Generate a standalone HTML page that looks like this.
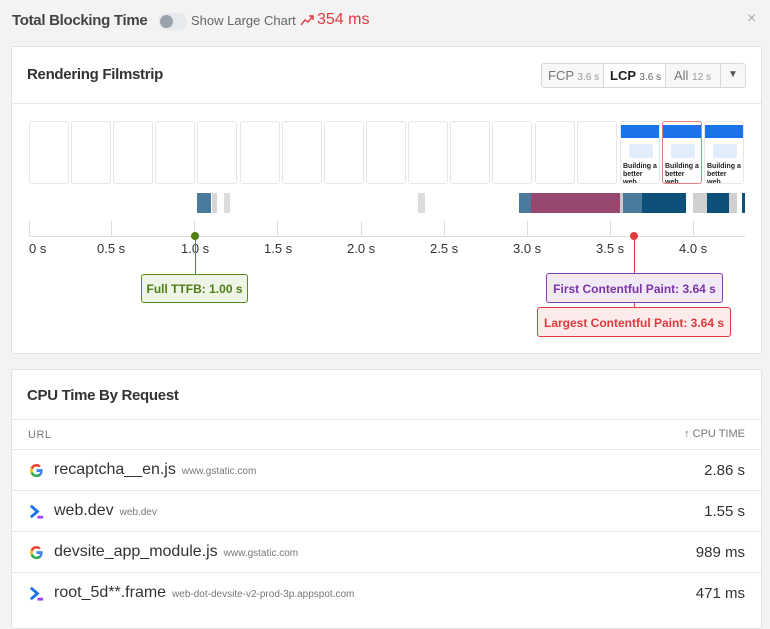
<!DOCTYPE html>
<html><head><meta charset="utf-8"><style>
*{box-sizing:border-box;margin:0;padding:0}
body{width:770px;height:612px;overflow:hidden;background:#f3f3f3;font-family:"Liberation Sans",Arial,sans-serif;color:#333;position:relative}
.abs{position:absolute}
.card{position:absolute;left:11px;width:751px;background:#fff;border:1px solid #e2e2e2;border-radius:3px}
.fr{position:absolute;top:121px;width:40px;height:63px;border:1px solid #e6e6e6;border-radius:3px;background:#fff;overflow:hidden}
.fr .hd{height:13px;background:#1a73e8;margin-top:3px}
.fr .img{position:absolute;left:8px;top:22px;width:24px;height:14px;background:#e3eefc;border-radius:2px}
.fr .t{position:absolute;left:2px;top:41px;font-size:7px;font-weight:bold;line-height:8px;color:#222}
.bar{position:absolute;top:193px;height:20px}
.tick{position:absolute;top:221px;width:1px;height:15px;background:#ddd}
.lab{position:absolute;top:241px;font-size:13px;color:#333}
.row{position:absolute;left:0;width:749px;height:41px;border-top:1px solid #e6e6e6}
.row .ic{position:absolute;left:16px;top:12px;width:17px;height:17px}
.row .n{position:absolute;left:42px;top:11px;font-size:16px;color:#333}
.row .d{font-size:10px;color:#777;margin-left:6px}
.row .v{position:absolute;right:16px;top:12px;font-size:15px;color:#333}
.ttl{font-size:15px;font-weight:bold;letter-spacing:-0.3px}
</style></head><body>
<div class="abs ttl" style="left:12px;top:12px;color:#444">Total Blocking Time</div>
<div class="abs" style="left:158px;top:13px;width:29px;height:17px;border-radius:9px;background:#e6e9ed"></div>
<div class="abs" style="left:160px;top:15px;width:13px;height:13px;border-radius:50%;background:#9aa3ab"></div>
<div class="abs" style="left:191px;top:13px;font-size:13px;color:#666">Show Large Chart</div>
<svg class="abs" style="left:300px;top:14px" width="14" height="12" viewBox="0 0 14 12"><path d="M1 11 L5 6 L8 8 L13 2 M9 2 H13 V6" stroke="#e0393e" stroke-width="1.4" fill="none"/></svg>
<div class="abs" style="left:317px;top:11px;font-size:16px;color:#e0393e">354 ms</div>
<div class="abs" style="left:747px;top:10px;font-size:16px;color:#aaa">×</div>

<div class="card" style="top:46px;height:308px">
 <div class="abs ttl" style="left:15px;top:19px;color:#333">Rendering Filmstrip</div>
 <div class="abs" style="left:529px;top:16px;width:205px;height:25px;border:1px solid #d8d8d8;border-radius:3px;background:#f7f7f7;font-size:13px;color:#777;display:flex">
  <div style="width:62px;border-right:1px solid #d8d8d8;padding:4px 0 0 6px">FCP <span style="font-size:10px;color:#999">3.6 s</span></div>
  <div style="width:62px;border-right:1px solid #d8d8d8;padding:4px 0 0 6px;background:#fff;color:#222;font-weight:bold">LCP <span style="font-size:10px;color:#666;font-weight:normal">3.6 s</span></div>
  <div style="width:55px;border-right:1px solid #d8d8d8;padding:4px 0 0 8px">All <span style="font-size:10px;color:#999">12 s</span></div>
  <div style="flex:1;text-align:center;padding-top:5px;font-size:10px;color:#555">▼</div>
 </div>
 <div class="abs" style="left:0;top:56px;width:749px;height:1px;background:#e6e6e6"></div>
</div>

<div class="fr" style="left:29px"></div><div class="fr" style="left:71px"></div><div class="fr" style="left:113px"></div><div class="fr" style="left:155px"></div><div class="fr" style="left:197px"></div><div class="fr" style="left:240px"></div><div class="fr" style="left:282px"></div><div class="fr" style="left:324px"></div><div class="fr" style="left:366px"></div><div class="fr" style="left:408px"></div><div class="fr" style="left:450px"></div><div class="fr" style="left:492px"></div><div class="fr" style="left:535px"></div><div class="fr" style="left:577px"></div>
<div class="fr" style="left:620px"><div class="hd"></div><div class="img"></div><div class="t">Building a better web, together</div></div>
<div class="fr" style="left:662px;border-color:#e08080"><div class="hd"></div><div class="img"></div><div class="t">Building a better web, together</div></div>
<div class="fr" style="left:704px"><div class="hd"></div><div class="img"></div><div class="t">Building a better web, together</div></div>

<div class="bar" style="left:197px;width:14px;background:#4a7b9d"></div>
<div class="bar" style="left:212px;width:5px;background:#d6d6d6"></div>
<div class="bar" style="left:224px;width:6px;background:#dcdcdc"></div>
<div class="bar" style="left:418px;width:7px;background:#dcdcdc"></div>
<div class="bar" style="left:519px;width:12px;background:#4a7b9d"></div>
<div class="bar" style="left:531px;width:89px;background:#984870"></div>
<div class="bar" style="left:620px;width:3px;background:#ccc"></div>
<div class="bar" style="left:623px;width:19px;background:#4a7b9d"></div>
<div class="bar" style="left:642px;width:44px;background:#0d5079"></div>
<div class="bar" style="left:693px;width:14px;background:#d0d0d0"></div>
<div class="bar" style="left:707px;width:22px;background:#0d5079"></div>
<div class="bar" style="left:729px;width:8px;background:#d0d0d0"></div>
<div class="bar" style="left:742px;width:3px;background:#0d5079"></div>

<div class="abs" style="left:29px;top:236px;width:716px;height:1px;background:#ddd"></div>
<div class="tick" style="left:29px"></div><div class="tick" style="left:111px"></div><div class="tick" style="left:194px"></div><div class="tick" style="left:277px"></div><div class="tick" style="left:361px"></div><div class="tick" style="left:444px"></div><div class="tick" style="left:527px"></div><div class="tick" style="left:610px"></div><div class="tick" style="left:693px"></div>
<div class="lab" style="left:29px">0 s</div><div class="lab" style="left:97px">0.5 s</div><div class="lab" style="left:181px">1.0 s</div><div class="lab" style="left:264px">1.5 s</div><div class="lab" style="left:347px">2.0 s</div><div class="lab" style="left:430px">2.5 s</div><div class="lab" style="left:513px">3.0 s</div><div class="lab" style="left:596px">3.5 s</div><div class="lab" style="left:679px">4.0 s</div>

<div class="abs" style="left:195px;top:237px;width:1px;height:37px;background:#5a8a1e"></div>
<div class="abs" style="left:191px;top:232px;width:8px;height:8px;border-radius:50%;background:#4f7d12"></div>
<div class="abs" style="left:141px;top:274px;width:107px;height:29px;border:1px solid #5a8a1e;border-radius:3px;background:#eef4e6;color:#4f7d12;font-size:12px;font-weight:bold;padding-top:7px;text-align:center">Full TTFB: 1.00 s</div>
<div class="abs" style="left:634px;top:237px;width:1px;height:72px;background:#e0393e"></div>
<div class="abs" style="left:630px;top:232px;width:8px;height:8px;border-radius:50%;background:#e0393e"></div>
<div class="abs" style="left:546px;top:273px;width:177px;height:30px;border:1px solid #8a3fb0;border-radius:3px;background:#f1e9f6;color:#7b35a5;font-size:12px;font-weight:bold;padding-top:8px;text-align:center">First Contentful Paint: 3.64 s</div>
<div class="abs" style="left:537px;top:307px;width:194px;height:30px;border:1px solid #e0393e;border-radius:3px;background:#fcebeb;color:#e0393e;font-size:12px;font-weight:bold;padding-top:8px;text-align:center">Largest Contentful Paint: 3.64 s</div>

<div class="card" style="top:369px;height:260px">
 <div class="abs ttl" style="left:15px;top:17px;color:#333">CPU Time By Request</div>
 <div class="abs" style="left:0;top:49px;width:749px;height:1px;background:#e6e6e6"></div>
 <div class="abs" style="left:16px;top:59px;font-size:11px;color:#777;letter-spacing:.5px">URL</div>
 <div class="abs" style="right:16px;top:58px;font-size:11px;color:#777">↑ CPU TIME</div>
 <div class="row" style="top:79px"><svg class="ic" viewBox="0 0 18 18"><path d="M15.5 9.2c0-.6 0-1.1-.2-1.6H9v3h3.7c-.2.9-.7 1.6-1.4 2.1v1.8h2.2c1.3-1.2 2-3 2-5.3z" fill="#4285f4"/><path d="M9 16c1.9 0 3.4-.6 4.5-1.7l-2.2-1.7c-.6.4-1.4.7-2.3.7-1.8 0-3.3-1.2-3.8-2.8H2.9v1.8C4 14.5 6.3 16 9 16z" fill="#34a853"/><path d="M5.2 10.5c-.1-.4-.2-.9-.2-1.4s.1-1 .2-1.4V5.9H2.9C2.4 6.8 2.2 7.9 2.2 9s.2 2.2.7 3.1z" fill="#fbbc05"/><path d="M9 4.8c1 0 1.9.4 2.6 1l1.9-1.9C12.4 2.8 10.9 2.1 9 2.1 6.3 2.1 4 3.6 2.9 5.9l2.3 1.8C5.7 6 7.2 4.8 9 4.8z" fill="#ea4335"/></svg><div class="n">recaptcha__en.js<span class="d">www.gstatic.com</span></div><div class="v">2.86 s</div></div>
 <div class="row" style="top:120px"><svg class="ic" viewBox="0 0 18 18"><path d="M3 3l7 6-7 6" stroke="#1a73e8" stroke-width="3" fill="none"/><path d="M10 15h6" stroke="#a142f4" stroke-width="3"/></svg><div class="n">web.dev<span class="d">web.dev</span></div><div class="v">1.55 s</div></div>
 <div class="row" style="top:161px"><svg class="ic" viewBox="0 0 18 18"><path d="M15.5 9.2c0-.6 0-1.1-.2-1.6H9v3h3.7c-.2.9-.7 1.6-1.4 2.1v1.8h2.2c1.3-1.2 2-3 2-5.3z" fill="#4285f4"/><path d="M9 16c1.9 0 3.4-.6 4.5-1.7l-2.2-1.7c-.6.4-1.4.7-2.3.7-1.8 0-3.3-1.2-3.8-2.8H2.9v1.8C4 14.5 6.3 16 9 16z" fill="#34a853"/><path d="M5.2 10.5c-.1-.4-.2-.9-.2-1.4s.1-1 .2-1.4V5.9H2.9C2.4 6.8 2.2 7.9 2.2 9s.2 2.2.7 3.1z" fill="#fbbc05"/><path d="M9 4.8c1 0 1.9.4 2.6 1l1.9-1.9C12.4 2.8 10.9 2.1 9 2.1 6.3 2.1 4 3.6 2.9 5.9l2.3 1.8C5.7 6 7.2 4.8 9 4.8z" fill="#ea4335"/></svg><div class="n">devsite_app_module.js<span class="d">www.gstatic.com</span></div><div class="v">989 ms</div></div>
 <div class="row" style="top:202px"><svg class="ic" viewBox="0 0 18 18"><path d="M3 3l7 6-7 6" stroke="#1a73e8" stroke-width="3" fill="none"/><path d="M10 15h6" stroke="#a142f4" stroke-width="3"/></svg><div class="n">root_5d**.frame<span class="d">web-dot-devsite-v2-prod-3p.appspot.com</span></div><div class="v">471 ms</div></div>
</div>
</body></html>
